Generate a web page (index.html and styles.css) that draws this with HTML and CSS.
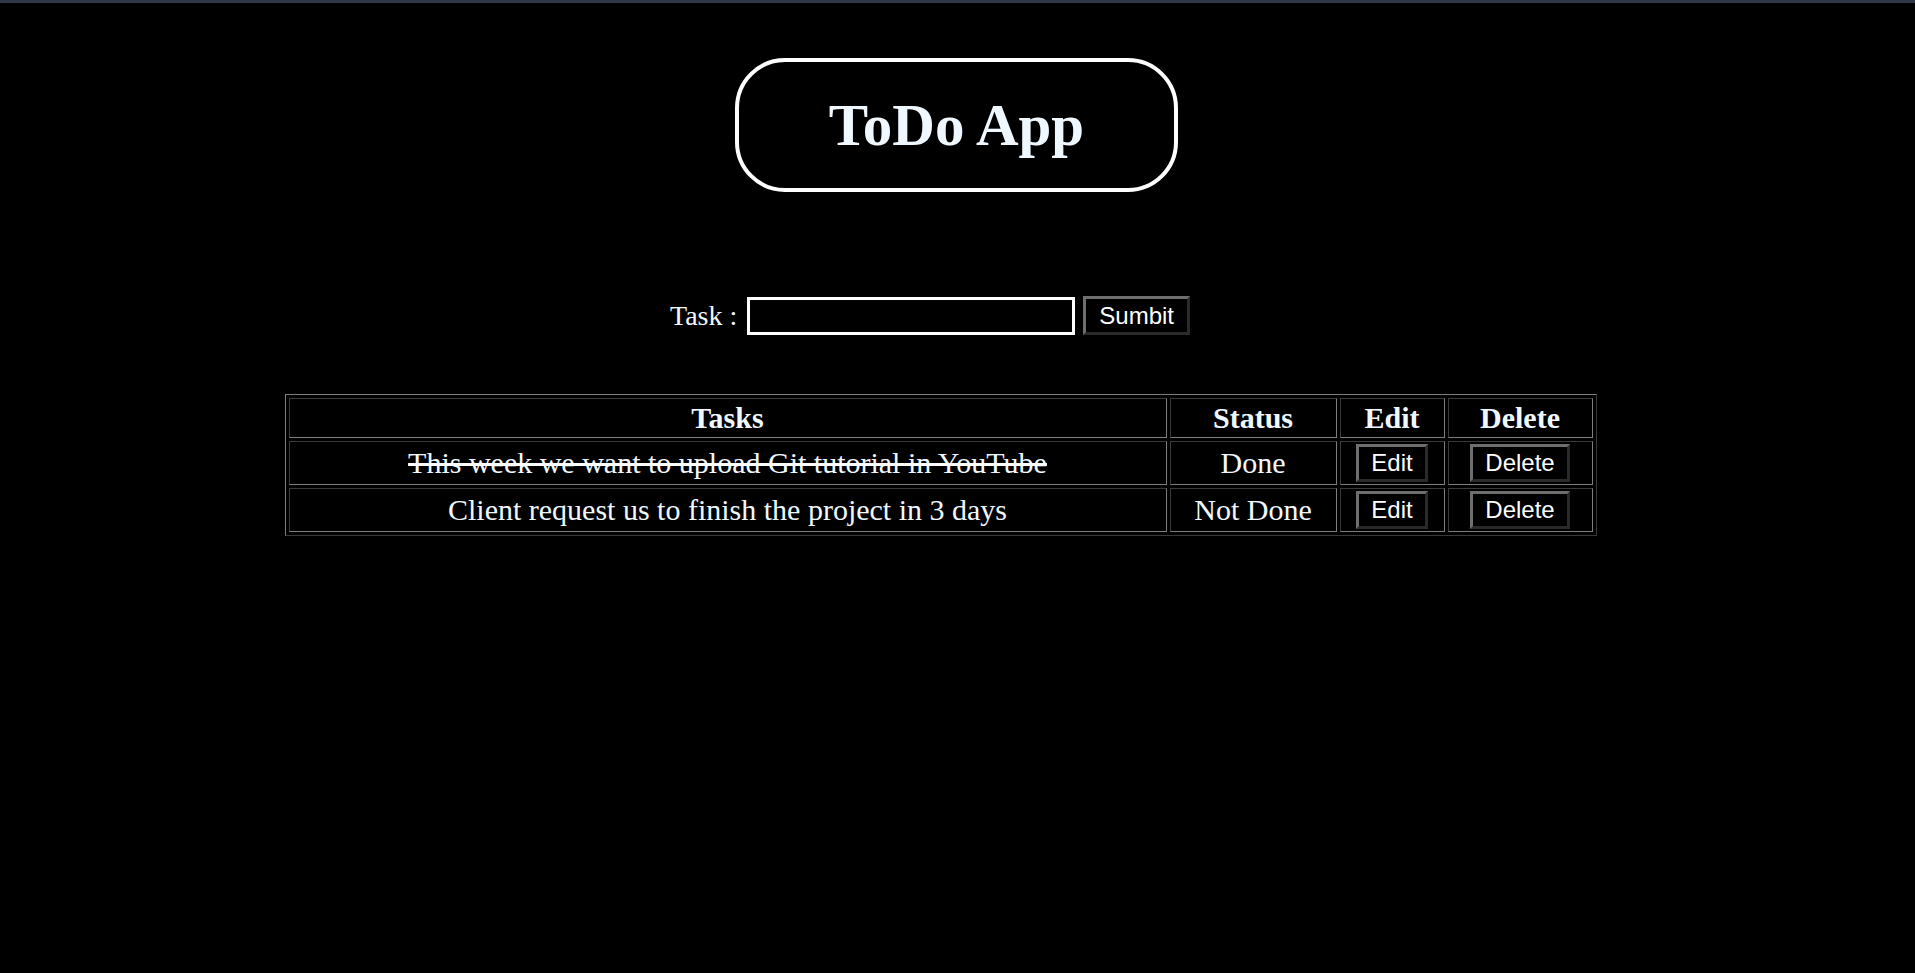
FILE: index.html
```html
<!DOCTYPE html>
<html lang="en">
<head>
<meta charset="utf-8">
<title>ToDo App</title>
<link rel="stylesheet" href="styles.css">
</head>
<body>
<div class="topbar"></div>
<header class="title-wrap">
  <h1 class="title">ToDo App</h1>
</header>
<form class="task-form" onsubmit="return false">
  <label class="task-label" for="task">Task :</label>
  <input class="task-input" id="task" type="text">
  <button class="btn btn-submit" type="submit">Sumbit</button>
</form>
<div class="table-wrap">
  <table class="tasks">
    <colgroup>
      <col class="col-task">
      <col class="col-status">
      <col class="col-edit">
      <col class="col-delete">
    </colgroup>
    <thead>
      <tr><th>Tasks</th><th>Status</th><th>Edit</th><th>Delete</th></tr>
    </thead>
    <tbody>
      <tr>
        <td class="done">This week we want to upload Git tutorial in YouTube</td>
        <td>Done</td>
        <td><button class="btn" type="button">Edit</button></td>
        <td><button class="btn" type="button">Delete</button></td>
      </tr>
      <tr>
        <td>Client request us to finish the project in 3 days</td>
        <td>Not Done</td>
        <td><button class="btn" type="button">Edit</button></td>
        <td><button class="btn" type="button">Delete</button></td>
      </tr>
    </tbody>
  </table>
</div>
</body>
</html>
```
FILE: styles.css
```css
html, body {
  margin: 0;
  padding: 0;
  background: #000;
  color: #f0f8ff;
  font-family: "Liberation Serif", "Times New Roman", serif;
}

.topbar {
  height: 3px;
  background: #30374a;
}

.title-wrap {
  display: flex;
  justify-content: center;
  margin-top: 55px;
  padding-right: 2px;
}

.title {
  box-sizing: border-box;
  width: 443px;
  height: 134px;
  margin: 0;
  border: 4px solid #fff;
  border-radius: 50px;
  display: flex;
  align-items: center;
  justify-content: center;
  font-size: 59px;
  font-weight: bold;
  color: #f0f8ff;
}

.task-form {
  display: flex;
  justify-content: center;
  align-items: center;
  margin-top: 104px;
  padding-right: 55px;
}

.task-label {
  font-size: 28px;
  margin-right: 10px;
}

.task-input {
  box-sizing: border-box;
  width: 328px;
  height: 38px;
  border: 3px solid #fff;
  background: #000;
  color: #fff;
  margin: 0 8px 0 0;
  padding: 0 4px;
  font-size: 20px;
  outline: none;
}

.btn {
  font-family: "Liberation Sans", Arial, sans-serif;
  font-size: 24px;
  line-height: 28px;
  color: #fff;
  background: #000;
  border: 3px solid;
  border-color: #6e6e6e #2a2a2a #2a2a2a #6e6e6e;
  padding: 2px 12px;
  margin: 0;
  cursor: pointer;
}

.btn-submit {
  padding: 2px 13px;
  line-height: 29px;
}

.table-wrap {
  display: flex;
  justify-content: center;
  margin-top: 59px;
  padding-right: 34px;
}

.tasks {
  width: 1312px;
  table-layout: fixed;
  border-collapse: separate;
  border-spacing: 3px;
  border: 1px solid;
  border-color: #7e7e7e #3a3a3a #3a3a3a #7e7e7e;
  font-size: 30px;
  color: #f0f8ff;
}

.col-task { width: 878px; }
.col-status { width: 167px; }
.col-edit { width: 105px; }
.col-delete { width: 145px; }

.tasks th,
.tasks td {
  border: 1px solid;
  border-color: #3a3a3a #7e7e7e #7e7e7e #3a3a3a;
  padding: 2px 1px;
  text-align: center;
  vertical-align: middle;
}

.tasks th {
  font-weight: bold;
}

.done {
  text-decoration: line-through;
  text-decoration-color: #fff;
}
```
